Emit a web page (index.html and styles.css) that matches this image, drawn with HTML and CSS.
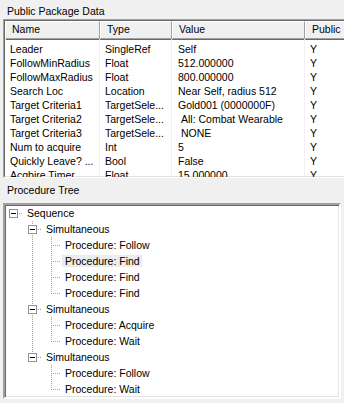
FILE: index.html
```html
<!DOCTYPE html>
<html>
<head>
<meta charset="utf-8">
<title>Package Editor</title>
<link rel="stylesheet" href="styles.css">
</head>
<body>
<div class="win">
  <div class="caption cap-top">Public Package Data</div>
  <div class="list">
    <div class="grid">
      <div class="hd">Name</div><div class="hd">Type</div><div class="hd">Value</div><div class="hd">Public</div><div class="hd hd-fill"></div>

      <div class="td">Leader</div><div class="td">SingleRef</div><div class="td val">Self</div><div class="td pub">Y</div><div class="td fill"></div>
      <div class="td">FollowMinRadius</div><div class="td">Float</div><div class="td val">512.000000</div><div class="td pub">Y</div><div class="td fill"></div>
      <div class="td">FollowMaxRadius</div><div class="td">Float</div><div class="td val">800.000000</div><div class="td pub">Y</div><div class="td fill"></div>
      <div class="td">Search Loc</div><div class="td">Location</div><div class="td val">Near Self, radius 512</div><div class="td pub">Y</div><div class="td fill"></div>
      <div class="td">Target Criteria1</div><div class="td">TargetSele...</div><div class="td val">Gold001 (0000000F)</div><div class="td pub">Y</div><div class="td fill"></div>
      <div class="td">Target Criteria2</div><div class="td">TargetSele...</div><div class="td val lead">All: Combat Wearable</div><div class="td pub">Y</div><div class="td fill"></div>
      <div class="td">Target Criteria3</div><div class="td">TargetSele...</div><div class="td val lead">NONE</div><div class="td pub">Y</div><div class="td fill"></div>
      <div class="td">Num to acquire</div><div class="td">Int</div><div class="td val">5</div><div class="td pub">Y</div><div class="td fill"></div>
      <div class="td">Quickly Leave? ...</div><div class="td">Bool</div><div class="td val">False</div><div class="td pub">Y</div><div class="td fill"></div>
      <div class="td">Acqbire Timer</div><div class="td">Float</div><div class="td val">15.000000</div><div class="td pub">Y</div><div class="td fill"></div>
    </div>
  </div>

  <div class="caption cap-tree">Procedure Tree</div>
  <div class="tree">
    <div class="trow">
      <span class="cell own-root"><span class="exp"></span></span>
      <span class="label">Sequence</span>
    </div>

    <div class="trow">
      <span class="cell"></span>
      <span class="cell own-mid"><span class="exp"></span></span>
      <span class="label">Simultaneous</span>
    </div>
    <div class="trow">
      <span class="cell"></span><span class="cell vline"></span>
      <span class="cell own-mid"></span>
      <span class="label">Procedure: Follow</span>
    </div>
    <div class="trow">
      <span class="cell"></span><span class="cell vline"></span>
      <span class="cell own-mid"></span>
      <span class="label hot">Procedure: Find</span>
    </div>
    <div class="trow">
      <span class="cell"></span><span class="cell vline"></span>
      <span class="cell own-mid"></span>
      <span class="label">Procedure: Find</span>
    </div>
    <div class="trow">
      <span class="cell"></span><span class="cell vline"></span>
      <span class="cell own-last"></span>
      <span class="label">Procedure: Find</span>
    </div>

    <div class="trow">
      <span class="cell"></span>
      <span class="cell own-mid"><span class="exp"></span></span>
      <span class="label">Simultaneous</span>
    </div>
    <div class="trow">
      <span class="cell"></span><span class="cell vline"></span>
      <span class="cell own-mid"></span>
      <span class="label">Procedure: Acquire</span>
    </div>
    <div class="trow">
      <span class="cell"></span><span class="cell vline"></span>
      <span class="cell own-last"></span>
      <span class="label">Procedure: Wait</span>
    </div>

    <div class="trow">
      <span class="cell"></span>
      <span class="cell own-last"><span class="exp"></span></span>
      <span class="label">Simultaneous</span>
    </div>
    <div class="trow">
      <span class="cell"></span><span class="cell"></span>
      <span class="cell own-mid"></span>
      <span class="label">Procedure: Follow</span>
    </div>
    <div class="trow">
      <span class="cell"></span><span class="cell"></span>
      <span class="cell own-last"></span>
      <span class="label">Procedure: Wait</span>
    </div>
  </div>
</div>
</body>
</html>
```

FILE: styles.css
```css
html, body {
  margin: 0;
  padding: 0;
  background: #f0f0f0;
}

body {
  width: 344px;
  height: 403px;
  overflow: hidden;
  font-family: "Liberation Sans", Arial, sans-serif;
  font-size: 10.5px;
  color: #000;
}

.win {
  width: 344px;
  height: 403px;
  overflow: hidden;
  display: flex;
  flex-direction: column;
}

.caption {
  height: 13px;
  line-height: 13px;
  padding-left: 7px;
  white-space: nowrap;
}

.cap-top {
  margin-top: 5px;
}

.cap-tree {
  margin-top: 6px;
}

/* ---------- list view ---------- */
.list {
  margin-left: 3px;
  margin-top: 1px;
  width: 380px;
  height: 159px;
  flex: none;
  box-sizing: border-box;
  border: 1px solid;
  border-color: #a0a0a0 #ffffff #ffffff #a0a0a0;
  background: #fff;
  overflow: hidden;
}

.grid {
  height: 100%;
  box-sizing: border-box;
  border: 1px solid;
  border-color: #696969 #e3e3e3 #e3e3e3 #696969;
  display: grid;
  grid-template-columns: 95px 72px 133px 45px 1fr;
  grid-template-rows: 18px 17px;
  grid-auto-rows: 14px;
  align-content: start;
}

.hd {
  background: #f0f0f0;
  box-sizing: border-box;
  border-top: 1px solid #fff;
  border-left: 1px solid #fff;
  border-right: 1px solid #a0a0a0;
  border-bottom: 1px solid #a0a0a0;
  box-shadow: 1px 1px 0 #696969;
  padding-left: 6px;
  line-height: 15px;
  white-space: nowrap;
  overflow: hidden;
}

.hd-fill {
  box-shadow: none;
  border-right: none;
}

.td {
  box-sizing: border-box;
  border-right: 1px solid #f0f0f0;
  padding-left: 5px;
  line-height: 14px;
  white-space: nowrap;
  overflow: hidden;
}

.grid > .td:nth-child(-n+10) {
  padding-top: 3px;
}

.val {
  padding-left: 6px;
}

.val.lead {
  padding-left: 9px;
}

.pub {
  padding-left: 5px;
}

.fill {
  border-right: none;
}

/* ---------- tree view ---------- */
.tree {
  margin-left: 3px;
  margin-top: 6px;
  width: 338px;
  height: 196px;
  flex: none;
  box-sizing: border-box;
  border: 2px solid;
  border-color: #a0a0a0 #ffffff #ffffff #a0a0a0;
  box-shadow: inset 1px 1px 0 #696969, inset -1px -1px 0 #e3e3e3;
  background: #fff;
}

.trow {
  display: flex;
  height: 16px;
  align-items: stretch;
}

.cell {
  width: 19px;
  flex: none;
  display: flex;
  align-items: center;
  padding-left: 4px;
  box-sizing: border-box;
  background-repeat: no-repeat;
}

/* dotted vertical line running the full row height */
.vline {
  background-image: repeating-linear-gradient(to bottom, #a0a0a0 0 1px, transparent 1px 2px);
  background-size: 1px 100%;
  background-position: 8px 0;
}

/* own connector: vertical line + horizontal branch */
.own-mid {
  background-image:
    repeating-linear-gradient(to bottom, #a0a0a0 0 1px, transparent 1px 2px),
    repeating-linear-gradient(to right, #a0a0a0 0 1px, transparent 1px 2px);
  background-size: 1px 100%, 10px 1px;
  background-position: 8px 0, 8px 8px;
}

.own-last {
  background-image:
    repeating-linear-gradient(to bottom, #a0a0a0 0 1px, transparent 1px 2px),
    repeating-linear-gradient(to right, #a0a0a0 0 1px, transparent 1px 2px);
  background-size: 1px 9px, 10px 1px;
  background-position: 8px 0, 8px 8px;
}

.own-root {
  background-image: repeating-linear-gradient(to right, #a0a0a0 0 1px, transparent 1px 2px);
  background-size: 10px 1px;
  background-position: 8px 8px;
}

.exp {
  width: 9px;
  height: 9px;
  box-sizing: border-box;
  border: 1px solid #919191;
  background:
    linear-gradient(#000, #000) center / 5px 1px no-repeat,
    #fff;
  margin-top: 1px;
}

.label {
  padding: 0 2px 0 3px;
  line-height: 16px;
  white-space: nowrap;
}

.label.hot {
  background: #ececec;
  line-height: 12px;
  margin: 2px 0;
}
```
